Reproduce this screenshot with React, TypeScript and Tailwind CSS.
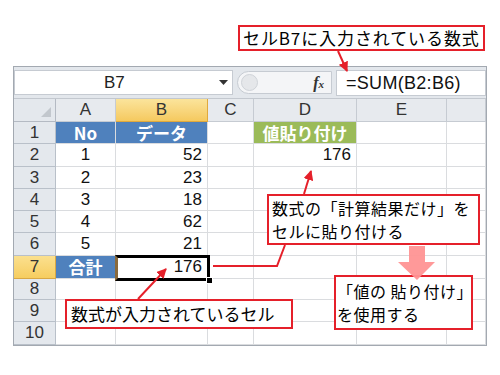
import React from "react";

const FONT = { fontFamily: '"Liberation Sans", "Noto Sans CJK JP", sans-serif' };
const JP = { fontFamily: '"Noto Sans CJK JP", "Liberation Sans", sans-serif' };

const colW = [42, 60, 92, 46, 103, 90, 39];
const rowH = [22, 23, 22, 22, 22, 23, 23, 21, 22, 23];

type Cell = { t?: string; align?: "l" | "c" | "r"; bg?: string; bold?: boolean; white?: boolean };

const data: Cell[][] = [
  [{ t: "No", align: "c", bg: "bg-[#4f81bd]", bold: true, white: true }, { t: "データ", align: "c", bg: "bg-[#4f81bd]", bold: true, white: true }, {}, { t: "値貼り付け", align: "c", bg: "bg-[#9bbb59]", bold: true, white: true }, {}, {}],
  [{ t: "1", align: "c" }, { t: "52", align: "r" }, {}, { t: "176", align: "r" }, {}, {}],
  [{ t: "2", align: "c" }, { t: "23", align: "r" }, {}, {}, {}, {}],
  [{ t: "3", align: "c" }, { t: "18", align: "r" }, {}, {}, {}, {}],
  [{ t: "4", align: "c" }, { t: "62", align: "r" }, {}, {}, {}, {}],
  [{ t: "5", align: "c" }, { t: "21", align: "r" }, {}, {}, {}, {}],
  [{ t: "合計", align: "c", bg: "bg-[#4f81bd]", bold: true, white: true }, { t: "176", align: "r" }, {}, {}, {}, {}],
  [{}, {}, {}, {}, {}, {}],
  [{}, {}, {}, {}, {}, {}],
  [{}, {}, {}, {}, {}, {}],
];

function Callout({ className, children }: { className: string; children: React.ReactNode }) {
  return (
    <div
      className={"absolute bg-white border-2 border-[#e5202a] text-black flex flex-col " + className}
      style={JP}
    >
      {children}
    </div>
  );
}

export default function App() {
  return (
    <div className="relative w-[500px] h-[375px] bg-white overflow-hidden" style={FONT}>
      <div className="pt-[66px] pl-[13px]">
        <div className="w-[474px] border border-[#a3a9b1] bg-white">
          {/* formula bar */}
          <div className="h-[32px] flex items-start gap-[4px] bg-[#e3e7ec] border-b border-[#c3c8cf] pt-[3px]">
            <div className="w-[219px] h-[25px] bg-white border border-[#c6cbd2] flex items-center pl-[89px] pr-[4px]">
              <span className="text-[17px] text-[#222] flex-1">B7</span>
              <svg width="9" height="5" viewBox="0 0 9 5">
                <path d="M0 0 H9 L4.5 5 Z" fill="#333" />
              </svg>
            </div>
            <div className="w-[95px] h-[23px] mt-[1px] bg-[#f4f5f7] border border-[#c6cbd2] rounded-l-full flex items-center justify-between pl-[3px] pr-[7px]">
              <div className="w-[17px] h-[17px] rounded-full bg-[#e5e7ea] border border-[#cfd3d8]" />
              <span
                className="text-[16px] italic font-bold text-[#333] leading-none"
                style={{ fontFamily: '"Liberation Serif", serif' }}
              >
                f<span className="text-[11px]">x</span>
              </span>
            </div>
            <div className="flex-1 h-[26px] bg-white border border-[#c6cbd2] flex items-center pl-[9px]">
              <span className="text-[18px] text-[#111] tracking-[0.3px]">=SUM(B2:B6)</span>
            </div>
          </div>
          {/* column headers */}
          <div className="flex h-[23px]">
            <div className="w-[42px] h-full bg-[#e4e8ed] border-r border-b border-[#b4bac3] flex items-end justify-end p-[4px]">
              <svg width="10" height="10" viewBox="0 0 10 10">
                <path d="M10 0 V10 H0 Z" fill="#c2c7cd" />
              </svg>
            </div>
            {["A", "B", "C", "D", "E", ""].map((c, i) => (
              <div
                key={i}
                className={
                  "h-full flex items-center justify-center text-[17px] border-r border-b " +
                  (c === "B"
                    ? "bg-gradient-to-b from-[#fbe49b] to-[#f5c95e] border-[#e0a93d] text-[#333]"
                    : "bg-[#e7eaee] border-[#c6cbd2] text-[#333]")
                }
                style={{ width: colW[i + 1] }}
              >
                {c}
              </div>
            ))}
          </div>
          {/* rows */}
          {data.map((row, r) => (
            <div key={r} className="flex" style={{ height: rowH[r] }}>
              <div
                className={
                  "w-[42px] h-full flex items-center justify-center text-[17px] border-r border-b " +
                  (r === 6
                    ? "bg-gradient-to-b from-[#fbe08e] to-[#f6cd5f] border-[#d9a844] text-[#333]"
                    : "bg-[#e4e8ed] border-[#b9c0c9] text-[#333]")
                }
              >
                {r + 1}
              </div>
              {row.map((cell, c) => (
                <div
                  key={c}
                  className={
                    "h-full flex items-center text-[17px] border-r border-b border-[#dadcdf] " +
                    (cell.bg ? cell.bg + " " : "") +
                    (cell.white ? "text-white " : "text-[#111] ") +
                    (cell.bold ? "font-bold " : "") +
                    (cell.align === "r" ? "justify-end pr-[5px] " : cell.align === "c" ? "justify-center " : "")
                  }
                  style={{ width: colW[c + 1], ...(cell.bold ? JP : {}) }}
                >
                  {cell.t}
                </div>
              ))}
            </div>
          ))}
        </div>
      </div>

      {/* selection on B7 */}
      <div className="absolute left-[115px] top-[255px] w-[95px] h-[26px] border-[3px] border-black border-l-[#8a6a3c]" />
      <div className="absolute left-[206px] top-[277px] w-[7px] h-[7px] bg-black border border-white" />

      {/* callouts */}
      <Callout className="left-[238px] top-[25px] w-[247px] h-[26px] pl-[3px] justify-center text-[17px] leading-[22px] tracking-[0.9px]">
        セルB7に入力されている数式
      </Callout>
      <Callout className="left-[267px] top-[194px] w-[213px] h-[51px] pl-[3px] justify-center text-[16px] leading-[23px] tracking-[0.5px]">
        <div>数式の「計算結果だけ」を</div>
        <div>セルに貼り付ける</div>
      </Callout>
      <Callout className="left-[65px] top-[299px] w-[228px] h-[30px] pl-[4px] justify-center text-[17px] leading-[22px]">
        数式が入力されているセル
      </Callout>
      <Callout className="left-[334px] top-[275px] w-[139px] h-[55px] pl-[1px] justify-center text-[16px] leading-[23px] tracking-[0.5px]">
        <div>「値の 貼り付け」</div>
        <div>を使用する</div>
      </Callout>

      {/* lines & arrows */}
      <svg className="absolute left-0 top-0 pointer-events-none" width="500" height="375" viewBox="0 0 500 375">
        <defs>
          <marker id="ah" viewBox="0 0 10 10" refX="9" refY="5" markerWidth="5" markerHeight="5" orient="auto-start-reverse">
            <path d="M0 0 L10 5 L0 10 Z" fill="#e5202a" />
          </marker>
        </defs>
        <line x1="338" y1="51" x2="347" y2="71" stroke="#e5202a" strokeWidth="2" markerEnd="url(#ah)" />
        <line x1="304" y1="194" x2="311" y2="171" stroke="#e5202a" strokeWidth="2" markerEnd="url(#ah)" />
        <polyline points="285,245 277,266 213,266" fill="none" stroke="#e5202a" strokeWidth="2" />
        <line x1="138" y1="299" x2="166" y2="269" stroke="#e5202a" strokeWidth="2" markerEnd="url(#ah)" />
        <path d="M409 246 H425 V262 H435 L417 280 L398 262 H409 Z" fill="#ff9494" fillOpacity="0.95" />
      </svg>
    </div>
  );
}
